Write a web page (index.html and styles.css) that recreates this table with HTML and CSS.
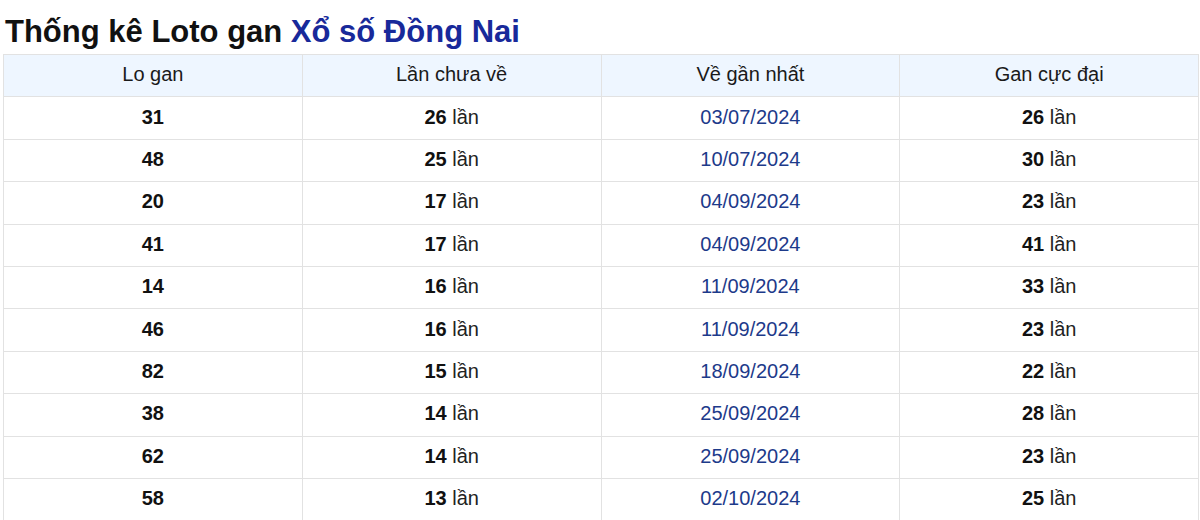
FILE: index.html
```html
<!DOCTYPE html>
<html lang="vi">
<head>
<meta charset="utf-8">
<title>Thống kê Loto gan Xổ số Đồng Nai</title>
<link rel="stylesheet" href="styles.css">
</head>
<body>
<div class="page">
  <h1 class="title">Thống kê Loto gan <span class="title-accent">Xổ số Đồng Nai</span></h1>
  <table class="gan-table">
    <thead>
      <tr><th>Lo gan</th><th>Lần chưa về</th><th>Về gần nhất</th><th>Gan cực đại</th></tr>
    </thead>
    <tbody>
      <tr><td><b>31</b></td><td><b>26</b> lần</td><td class="date">03/07/2024</td><td><b>26</b> lần</td></tr>
      <tr><td><b>48</b></td><td><b>25</b> lần</td><td class="date">10/07/2024</td><td><b>30</b> lần</td></tr>
      <tr><td><b>20</b></td><td><b>17</b> lần</td><td class="date">04/09/2024</td><td><b>23</b> lần</td></tr>
      <tr><td><b>41</b></td><td><b>17</b> lần</td><td class="date">04/09/2024</td><td><b>41</b> lần</td></tr>
      <tr><td><b>14</b></td><td><b>16</b> lần</td><td class="date">11/09/2024</td><td><b>33</b> lần</td></tr>
      <tr><td><b>46</b></td><td><b>16</b> lần</td><td class="date">11/09/2024</td><td><b>23</b> lần</td></tr>
      <tr><td><b>82</b></td><td><b>15</b> lần</td><td class="date">18/09/2024</td><td><b>22</b> lần</td></tr>
      <tr><td><b>38</b></td><td><b>14</b> lần</td><td class="date">25/09/2024</td><td><b>28</b> lần</td></tr>
      <tr><td><b>62</b></td><td><b>14</b> lần</td><td class="date">25/09/2024</td><td><b>23</b> lần</td></tr>
      <tr><td><b>58</b></td><td><b>13</b> lần</td><td class="date">02/10/2024</td><td><b>25</b> lần</td></tr>
    </tbody>
  </table>
</div>
</body>
</html>
```
FILE: styles.css
```css
html, body {
  margin: 0;
  padding: 0;
  background: #ffffff;
}
body {
  font-family: "Liberation Sans", Arial, sans-serif;
  color: #111111;
}
.page {
  padding: 14px 1px 0 3px;
}
.title {
  margin: 0 0 4px 2px;
  font-size: 31px;
  line-height: 36px;
  font-weight: bold;
  color: #111111;
}
.title-accent {
  color: #18299a;
}
.gan-table {
  width: 100%;
  border-collapse: collapse;
  table-layout: fixed;
  font-size: 20px;
}
.gan-table th,
.gan-table td {
  border: 1px solid #e2e2e2;
  text-align: center;
  padding: 0 0 2px 0;
  height: 39.4px;
  line-height: 23px;
}
.gan-table th {
  font-weight: normal;
  background: #eef6ff;
  color: #1a1a1a;
}
.gan-table td b {
  font-weight: bold;
  color: #111111;
}
.gan-table td {
  color: #222222;
}
.gan-table td.date {
  color: #1d3a8a;
}
```
